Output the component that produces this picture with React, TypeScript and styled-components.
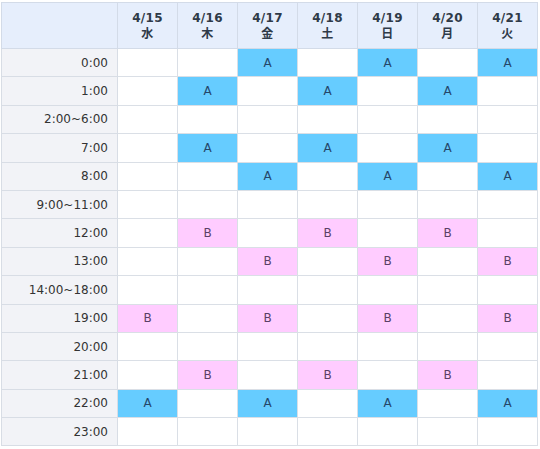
import React from 'react';
import styled, { createGlobalStyle } from 'styled-components';

const GlobalStyle = createGlobalStyle`
  html, body {
    margin: 0;
    padding: 0;
    background: #ffffff;
  }
  body {
    font-family: "DejaVu Sans", Verdana, "Noto Sans CJK JP", sans-serif;
  }
`;

type Mark = 'A' | 'B' | '';

const days = [
  { date: '4/15', dow: '水' },
  { date: '4/16', dow: '木' },
  { date: '4/17', dow: '金' },
  { date: '4/18', dow: '土' },
  { date: '4/19', dow: '日' },
  { date: '4/20', dow: '月' },
  { date: '4/21', dow: '火' },
];

const rows: { time: string; cells: Mark[] }[] = [
  { time: '0:00', cells: ['', '', 'A', '', 'A', '', 'A'] },
  { time: '1:00', cells: ['', 'A', '', 'A', '', 'A', ''] },
  { time: '2:00~6:00', cells: ['', '', '', '', '', '', ''] },
  { time: '7:00', cells: ['', 'A', '', 'A', '', 'A', ''] },
  { time: '8:00', cells: ['', '', 'A', '', 'A', '', 'A'] },
  { time: '9:00~11:00', cells: ['', '', '', '', '', '', ''] },
  { time: '12:00', cells: ['', 'B', '', 'B', '', 'B', ''] },
  { time: '13:00', cells: ['', '', 'B', '', 'B', '', 'B'] },
  { time: '14:00~18:00', cells: ['', '', '', '', '', '', ''] },
  { time: '19:00', cells: ['B', '', 'B', '', 'B', '', 'B'] },
  { time: '20:00', cells: ['', '', '', '', '', '', ''] },
  { time: '21:00', cells: ['', 'B', '', 'B', '', 'B', ''] },
  { time: '22:00', cells: ['A', '', 'A', '', 'A', '', 'A'] },
  { time: '23:00', cells: ['', '', '', '', '', '', ''] },
];

const Wrap = styled.div`
  padding: 2px 0 0 1px;
`;

const Table = styled.table`
  border-collapse: collapse;
  table-layout: fixed;
  width: 537px;
  border: 1px solid #d5dce8;
  font-size: 12px;
`;

const HeadCell = styled.th<{ $corner?: boolean }>`
  height: 45px;
  width: ${(p) => (p.$corner ? '115px' : '59px')};
  padding: 0;
  background: #e6eefc;
  border: 1px solid #d3dbe8;
  color: #2f3a48;
  font-weight: bold;
  line-height: 16px;
  letter-spacing: 0.3px;
  text-align: center;
  vertical-align: middle;
`;

const TimeCell = styled.th`
  height: 27.4px;
  padding: 0 9px 0 0;
  background: #f2f3f7;
  border: 1px solid #d8dde5;
  color: #333;
  font-weight: normal;
  text-align: right;
  white-space: nowrap;
`;

const SlotCell = styled.td<{ $mark: Mark }>`
  padding: 0;
  border: 1px solid #dadfe6;
  text-align: center;
  background: ${(p) => (p.$mark === 'A' ? '#66ccff' : p.$mark === 'B' ? '#ffccff' : '#ffffff')};
  color: ${(p) => (p.$mark === 'A' ? '#25466a' : '#5a3f66')};
`;

const App = () => {
  return (
    <>
      <GlobalStyle />
      <Wrap>
        <Table>
          <thead>
            <tr>
              <HeadCell $corner />
              {days.map((d) => (
                <HeadCell key={d.date}>
                  {d.date}
                  <br />
                  {d.dow}
                </HeadCell>
              ))}
            </tr>
          </thead>
          <tbody>
            {rows.map((r) => (
              <tr key={r.time}>
                <TimeCell>{r.time}</TimeCell>
                {r.cells.map((c, i) => (
                  <SlotCell key={i} $mark={c}>
                    {c}
                  </SlotCell>
                ))}
              </tr>
            ))}
          </tbody>
        </Table>
      </Wrap>
    </>
  );
};

export default App;
